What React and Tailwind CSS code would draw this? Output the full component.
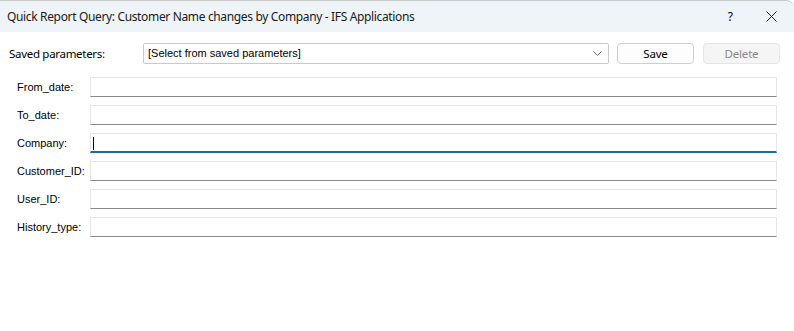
import React from 'react';

const fields = ['From_date:', 'To_date:', 'Company:', 'Customer_ID:', 'User_ID:', 'History_type:'];

function Field({ label, focused }) {
  return (
    <div className="flex items-center h-[20px]">
      <div className="w-[73px] text-[11px] text-black" style={{ fontFamily: '"Liberation Sans", Arial, sans-serif' }}>
        {label}
      </div>
      <div
        className={
          'relative w-[687px] h-[20px] bg-white border border-[#e6e6e6] ' +
          (focused ? 'border-b-2 border-b-[#1e6aa3]' : 'border-b-[#8a8a8a]')
        }
      >
        {focused && <div className="absolute left-[2px] top-[3px] w-px h-[13px] bg-black" />}
      </div>
    </div>
  );
}

function App() {
  return (
    <div className="w-[794px] h-[331px] bg-white overflow-hidden" style={{ fontFamily: '"Noto Sans", "Open Sans", sans-serif' }}>
      {/* title bar */}
      <div className="h-[32px] bg-[#eff4f9] border-t border-[#c8c8c8] rounded-tr-[8px] flex items-center pl-[7px] pr-[14px]">
        <span className="text-[12px] text-[#1a1a1a] tracking-[-0.35px]">
          Quick Report Query: Customer Name changes by Company - IFS Applications
        </span>
        <span className="ml-auto text-[12px] text-black mr-[33px]">?</span>
        <svg width="11" height="11" viewBox="0 0 11 11" className="mr-[3px]">
          <path d="M0.5 0.5 L10.5 10.5 M10.5 0.5 L0.5 10.5" stroke="#222" strokeWidth="1" />
        </svg>
      </div>

      {/* saved params row */}
      <div className="flex items-center mt-[11px] pl-[9px] h-[21px]">
        <div className="w-[134px] text-[11.5px] text-black tracking-[-0.3px]">Saved parameters:</div>
        <div className="w-[466px] h-[21px] border border-[#c9c9c9] rounded-[2px] bg-white flex items-center pl-[4px] pr-[6px]">
          <span className="text-[11px] text-black" style={{ fontFamily: '"Liberation Sans", Arial, sans-serif' }}>
            [Select from saved parameters]
          </span>
          <svg width="9" height="5" viewBox="0 0 9 5" className="ml-auto">
            <path d="M0.5 0.5 L4.5 4.5 L8.5 0.5" fill="none" stroke="#666" strokeWidth="1" />
          </svg>
        </div>
        <button className="ml-[8px] w-[77px] h-[21px] rounded-[4px] border border-[#cfcfcf] bg-[#fdfdfd] text-[11.5px] tracking-[-0.2px] text-black">
          Save
        </button>
        <button className="ml-[9px] w-[77px] h-[21px] rounded-[4px] border border-[#e5e5e5] bg-[#f5f5f5] text-[11.5px] tracking-[-0.2px] text-[#8a8a8a]">
          Delete
        </button>
      </div>

      {/* fields */}
      <div className="flex flex-col gap-[8px] mt-[13px] pl-[17px]">
        {fields.map((f) => (
          <Field key={f} label={f} focused={f === 'Company:'} />
        ))}
      </div>
    </div>
  );
}

export default App;
